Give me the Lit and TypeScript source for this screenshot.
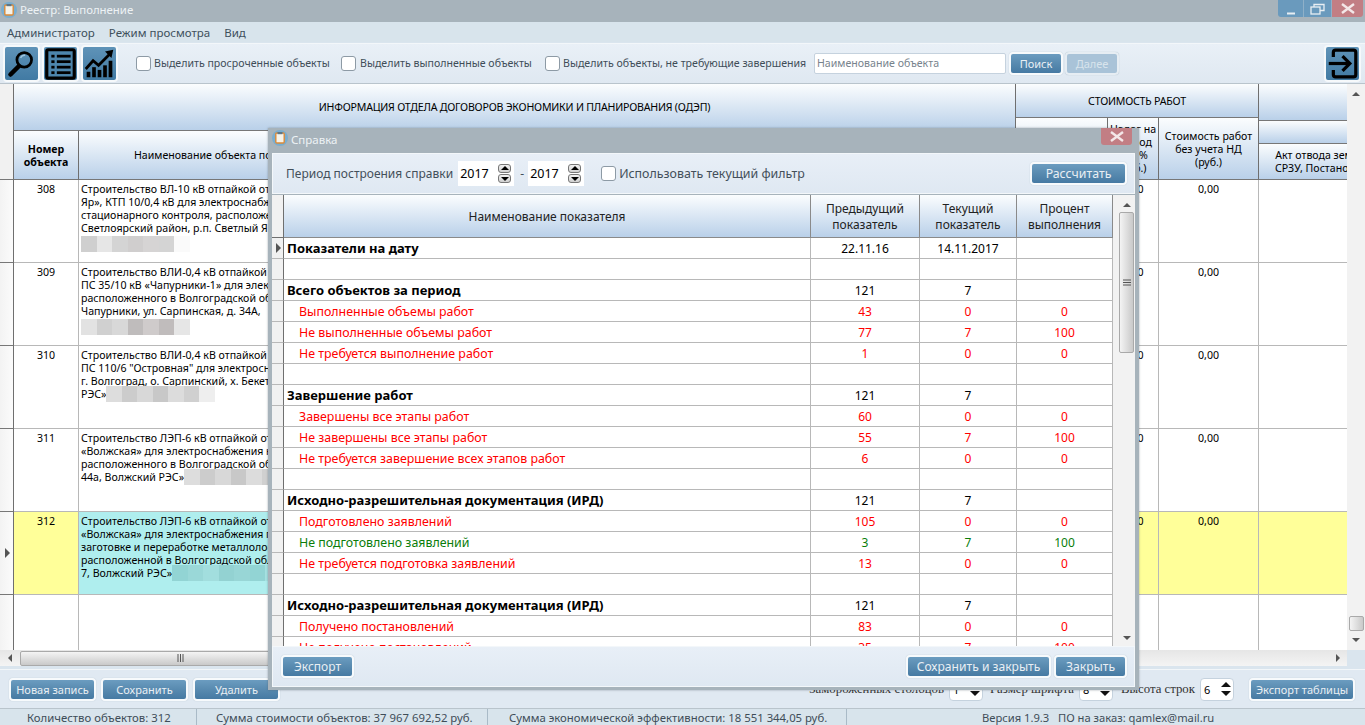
import { LitElement, html, css, svg } from "lit";
import { customElement } from "lit/decorators.js";

const appIcon = html`<svg class="appicon" viewBox="0 0 16 16" width="16" height="16"><circle cx="8" cy="8" r="8" fill="#79adcf"/><rect x="3.8" y="3" width="8.4" height="10" rx="1" fill="#f5f3ea" stroke="#d98a3a" stroke-width="1.4"/><rect x="5.5" y="2" width="5" height="2.2" fill="#5f7686"/></svg>`;

const icoSearch = svg`<circle cx="21" cy="14" r="8" fill="none" stroke="#000" stroke-width="3"/><path d="M15 21 L6 30" stroke="#000" stroke-width="5" stroke-linecap="round"/><path d="M17 12a5 5 0 0 1 5-3" stroke="#9fc5de" stroke-width="1.5" fill="none"/>`;
const icoList = svg`<rect x="3" y="3" width="30" height="31" rx="1.5" fill="#4d86ad" stroke="#000" stroke-width="3.5"/>${[10, 16, 22, 28].map(
  (y) => svg`<rect x="8" y="${y - 1.5}" width="3.5" height="3" fill="#000"/><rect x="14" y="${y - 1.5}" width="15" height="3" fill="#000"/>`
)}`;
const icoChart = svg`<path d="M3 24 L11 15 L17 20 L29 8" fill="none" stroke="#000" stroke-width="3"/><path d="M24 5 L33 3 L31 12 Z" fill="#000"/>${[
  [4, 27, 4],
  [10, 22, 4],
  [16, 25, 4],
  [22, 20, 4],
  [28, 15, 4],
].map(([x, y, w]) => svg`<rect x="${x}" y="${y}" width="${w}" height="${33 - y}" fill="#000"/>`)}`;
const icoExit = svg`<path d="M8 11 V6 a2.5 2.5 0 0 1 2.5 -2.5 H30 a2.5 2.5 0 0 1 2.5 2.5 V30 a2.5 2.5 0 0 1 -2.5 2.5 H10.5 a2.5 2.5 0 0 1 -2.5 -2.5 V25" fill="none" stroke="#000" stroke-width="3.5"/><path d="M3 18 H25" stroke="#000" stroke-width="3.5"/><path d="M18 10 L26 18 L18 26" fill="none" stroke="#000" stroke-width="3.5"/>`;
const icoClose = html`<svg width="14" height="11"><path d="M1 1l12 9M13 1L1 10" stroke="#f3e7e8" stroke-width="2.4"/></svg>`;

type Blk = string[];
const b1: Blk = ["#cfcfcf", "#e6e6e6", "#d4d4d4", "#d0cece", "#d6d4d4", "#d4d4d4", "#fafafa"];
const b2: Blk = ["#e2e2e2", "#d0d0d0", "#d8d8d8", "#bfbcbc", "#cfcbcb", "#c0bcbc", "#e6e6e6"];
const b3: Blk = ["#dddddd", "#cccccc", "#d8d8d8", "#c8c8c8", "#dcdcdc", "#d0d0d0", "#eeeeee"];
const b4: Blk = ["#92d4d4", "#9ad8d8", "#a2dede", "#93d2d2", "#98d6d6", "#92d4d4", "#a6e2e2"];

const rows = [
  {
    n: "308",
    lines: [
      "Строительство ВЛ-10 кВ отпайкой от",
      "Яр», КТП 10/0,4 кВ для электроснабжения",
      "стационарного контроля, расположенного",
      "Светлоярский район, р.п. Светлый Яр",
    ],
    tail: "",
    blur: b1,
  },
  {
    n: "309",
    lines: [
      "Строительство ВЛИ-0,4 кВ отпайкой от",
      "ПС 35/10 кВ «Чапурники-1» для электроснабжения",
      "расположенного в Волгоградской области",
      "Чапурники, ул. Сарпинская, д. 34А,",
    ],
    tail: "",
    blur: b2,
  },
  {
    n: "310",
    lines: [
      "Строительство ВЛИ-0,4 кВ отпайкой от",
      'ПС 110/6 "Островная" для электроснабжения',
      "г. Волгоград, о. Сарпинский, х. Бекетовка",
    ],
    tail: "РЭС»",
    blur: b3,
  },
  {
    n: "311",
    lines: [
      "Строительство ЛЭП-6 кВ отпайкой от",
      "«Волжская» для электроснабжения нежилого",
      "расположенного в Волгоградской области",
    ],
    tail: "44а, Волжский РЭС»",
    blur: b3,
  },
  {
    n: "312",
    lines: [
      "Строительство ЛЭП-6 кВ отпайкой от",
      "«Волжская» для электроснабжения пункта по",
      "заготовке и переработке металлолома",
      "расположенной в Волгоградской области",
    ],
    tail: "7, Волжский РЭС»",
    blur: b4,
    sel: true,
  },
];

type R = { t?: string; a?: string; b?: string; c?: string; k?: string };
const stats: R[] = [
  { t: "Показатели на дату", a: "22.11.16", b: "14.11.2017", c: "", k: "bold" },
  {},
  { t: "Всего объектов за период", a: "121", b: "7", c: "", k: "bold" },
  { t: "Выполненные объемы работ", a: "43", b: "0", c: "0", k: "red" },
  { t: "Не выполненные объемы работ", a: "77", b: "7", c: "100", k: "red" },
  { t: "Не требуется выполнение работ", a: "1", b: "0", c: "0", k: "red" },
  {},
  { t: "Завершение работ", a: "121", b: "7", c: "", k: "bold" },
  { t: "Завершены все этапы работ", a: "60", b: "0", c: "0", k: "red" },
  { t: "Не завершены все этапы работ", a: "55", b: "7", c: "100", k: "red" },
  { t: "Не требуется завершение всех этапов работ", a: "6", b: "0", c: "0", k: "red" },
  {},
  { t: "Исходно-разрешительная документация (ИРД)", a: "121", b: "7", c: "", k: "bold" },
  { t: "Подготовлено заявлений", a: "105", b: "0", c: "0", k: "red" },
  { t: "Не подготовлено заявлений", a: "3", b: "7", c: "100", k: "green" },
  { t: "Не требуется подготовка заявлений", a: "13", b: "0", c: "0", k: "red" },
  {},
  { t: "Исходно-разрешительная документация (ИРД)", a: "121", b: "7", c: "", k: "bold" },
  { t: "Получено постановлений", a: "83", b: "0", c: "0", k: "red" },
  { t: "Не получено постановлений", a: "35", b: "7", c: "100", k: "red" },
];

const spinBtns = html`<span class="spinbtns"><i class="up"></i><i class="down"></i></span>`;
const arrows = html`<span class="arrows"><i></i><i></i></span>`;

@customElement("app-root")
export class AppRoot extends LitElement {
  static styles = css`
    :host {
      display: block;
      position: relative;
      width: 1365px;
      height: 725px;
      overflow: hidden;
      background: #dae5ee;
      font-family: "Noto Sans", "Liberation Sans", sans-serif;
      font-size: 10.6px;
      color: #000;
    }
    * { box-sizing: border-box; }
    .titlebar {
      height: 22px;
      background: #a7b3bb;
      display: flex;
      align-items: flex-start;
      color: #edf2f5;
      font-size: 11.4px;
      line-height: 20px;
    }
    .appicon { flex: none; margin: 2px 3px 0 1px; }
    .title { flex: 1; }
    .winbtns { display: flex; margin-right: 2px; height: 17px; }
    .winbtn { height: 17px; display: flex; align-items: center; justify-content: center; background: #6a9abd; border-right: 1px solid #8fb0c8; }
    .winbtn.min { width: 26px; border-radius: 0 0 0 3px; }
    .winbtn.max { width: 28px; }
    .winbtn.close { width: 31px; background: #c27e84; border: 0; border-radius: 0 0 3px 0; }
    .menu {
      height: 20px;
      background: #d8e4ec;
      display: flex;
      gap: 14px;
      padding-left: 7px;
      align-items: center;
      color: #40505c;
      font-size: 11.5px;
    }
    .toolbar {
      height: 41px;
      margin-top: 1px;
      background: linear-gradient(#e9f0f7, #dfe8f1);
      border-top: 1px solid #f3f7fa;
      border-bottom: 1px solid #b9c4cc;
      display: flex;
      align-items: center;
      padding: 0 2px 1px 3px;
      color: #3f4d58;
    }
    .tbtn {
      width: 37px;
      height: 37px;
      flex: none;
      margin-right: 2px;
      background: linear-gradient(#5f93b8, #417aa3);
      border: 2px solid #f6f9fb;
      border-radius: 4px;
      display: flex;
      align-items: center;
      justify-content: center;
    }
    .tbtn svg { display: block; }
    .chk { display: flex; align-items: center; white-space: nowrap; flex: none; }
    .chk1 { margin-left: 16px; width: 205px; }
    .chk2 { width: 204px; }
    .chk3 { width: 269px; }
    .box {
      width: 15px;
      height: 15px;
      flex: none;
      background: #fff;
      border: 1px solid #8d9aa5;
      border-radius: 3px;
      margin-right: 3px;
    }
    .chk2 .box { margin-right: 4px; }
    .search {
      width: 192px;
      height: 21px;
      background: #fff;
      border: 1px solid #c5d2de;
      border-radius: 2px;
      padding-left: 2px;
      line-height: 19px;
      color: #77838d;
      flex: none;
    }
    .btn {
      flex: none;
      display: flex;
      align-items: center;
      justify-content: center;
      height: 23px;
      background: linear-gradient(#6b9cc0 0%, #5a8cb1 45%, #467aa3 100%);
      border: 2px solid #f7fafc;
      border-radius: 4px;
      color: #e9eff4;
      box-shadow: 0 0 1px #9fb2c2;
      white-space: nowrap;
      font-size: 11px;
    }
    .btn.off { background: #a9c3d8; color: #d8e4ec; border-color: #e6edf3; }
    .btn-find { width: 54px; margin-left: 3px; }
    .btn-next { width: 54px; margin-left: 2px; }
    .btn-act { width: 87px; }
    .btn-act + .btn-act { margin-left: 5px; }
    .btn-export { width: 106px; margin-left: 15px; margin-right: 1px; }
    .btn-calc { width: 97px; font-size: 12.3px; }
    .btn-dexp { width: 73px; font-size: 12px; }
    .btn-save { width: 145px; font-size: 12.1px; }
    .btn-close { width: 73px; margin-left: 3px; font-size: 12.2px; }
    .grow { flex: 1; }

    .gridwrap { height: 566px; background: #fff; display: flex; overflow: hidden; }
    .gridmain { width: 1347px; height: 566px; overflow: hidden; flex: none; }
    .ghead { display: flex; height: 96px; }
    .gcorner { width: 14px; background: #f1f1f1; border-right: 1px solid #6f6f6f; border-bottom: 1px solid #777; flex: none; }
    .hc {
      background: linear-gradient(#fbfdfe, #b9d0e9);
      border-right: 1px solid #6f6f6f;
      border-bottom: 1px solid #777;
      display: flex;
      align-items: center;
      justify-content: center;
      text-align: center;
      overflow: hidden;
      line-height: 13px;
      flex: none;
      padding-top: 1px;
    }
    .caps { letter-spacing: -0.21px; }
    .hh34.caps { padding-top: 2px; }
    .hgroup { display: flex; flex-direction: column; flex: none; }
    .hg1 { width: 1002px; }
    .hg2 { width: 243px; }
    .hg3 { width: 88px; overflow: hidden; }
    .hh47 { height: 47px; }
    .hh34 { height: 34px; }
    .hh37 { height: 37px; }
    .hh23 { height: 23px; }
    .hh36 { height: 36px; }
    .wide { width: 196px; border-right: 0; white-space: nowrap; }
    .hrow { display: flex; flex: 1; }
    .b { font-weight: 700; }
    .hname { justify-content: flex-start; padding-left: 55px; white-space: nowrap; }
    .grow-row { display: flex; height: 83px; }
    .grow-row.last { height: 60px; }
    .last > * { border-bottom: 0; }
    .rh { width: 14px; flex: none; background: linear-gradient(90deg, #f3f3f3, #fbfbfb); border-right: 1px solid #6f6f6f; border-bottom: 1px solid #777; display: flex; align-items: center; padding-left: 5px; }
    .tri { width: 0; height: 0; border-left: 5px solid #555; border-top: 5px solid transparent; border-bottom: 5px solid transparent; }
    .c { flex: none; border-right: 1px solid #b8b8b8; border-bottom: 1px solid #b8b8b8; overflow: hidden; padding: 3px 2px 0; line-height: 13px; text-align: center; }
    .c.name { text-align: left; white-space: nowrap; }
    .sel .c { background: #ffff99; }
    .sel .c.name { background: #afeeee; }
    .blur { display: flex; height: 16px; margin-top: -2px; }
    .blur i { display: block; width: 15.5px; height: 16px; }
    .gap3 { height: 3px; }
    .inl { display: flex; height: 13px; }
    .w1 { width: 65px; }
    .w2 { width: 937px; }
    .w3 { width: 92px; }
    .w4 { width: 51px; padding-left: 0; padding-right: 0; }
    .w5 { width: 100px; }
    .w6 { width: 88px; border-right: 0; }
    .vbar { width: 18px; flex: none; background: #f2f2f2; display: flex; flex-direction: column; align-items: center; }
    .sb-arrow { width: 0; height: 0; border-left: 4px solid transparent; border-right: 4px solid transparent; flex: none; }
    .sb-arrow.u { border-bottom: 4px solid #555; margin-top: 8px; }
    .sb-arrow.d { border-top: 4px solid #555; }
    .vthumb { width: 15px; background: linear-gradient(90deg, #f4f4f4, #c9c9c9); border: 1px solid #a9a9a9; border-radius: 2px; flex: none; }
    .vthumb.main { height: 15px; margin-bottom: 7px; }
    .sb-arrow.d.main { margin-bottom: 8px; }
    .vthumb.dlg { height: 141px; margin-top: 5px; display: flex; align-items: center; justify-content: center; }
    .sb-arrow.d.dlg { margin-bottom: 6px; }
    .hbar { height: 16px; background: linear-gradient(#e6e6e6, #f4f4f4); display: flex; align-items: center; width: 1347px; }
    .sb-arrow.l { border: 0; border-top: 4px solid transparent; border-bottom: 4px solid transparent; border-right: 4px solid #555; margin-left: 8px; }
    .sb-arrow.r { border: 0; border-top: 4px solid transparent; border-bottom: 4px solid transparent; border-left: 4px solid #555; margin-right: 7px; }
    .hthumb { width: 322px; height: 15px; margin-left: 8px; background: linear-gradient(#f4f4f4, #c9c9c9); border: 1px solid #a9a9a9; border-radius: 2px; display: flex; align-items: center; justify-content: center; flex: none; }
    .grip { display: block; }

    .bottom { height: 40px; background: #e0e9f2; border-top: 1px solid #f2f6f9; border-bottom: 1px solid #b9c4cc; margin-top: 3px; display: flex; align-items: center; padding: 0 9px; color: #3f4d58; }
    .lbl { font-family: "Liberation Serif", serif; font-size: 12.8px; white-space: nowrap; color: #333; }
    .lbl2 { margin-left: 7px; }
    .lbl3 { margin-left: 8px; }
    .spin { height: 23px; width: 34px; margin-left: 5px; background: #fff; border: 1px solid #c5d2de; border-radius: 4px; display: flex; align-items: center; padding: 0 2px 0 3px; flex: none; color: #000; font-size: 11px; justify-content: space-between; }
    .arrows { display: flex; flex-direction: column; gap: 4px; }
    .arrows i { display: block; width: 0; height: 0; border-left: 5px solid transparent; border-right: 5px solid transparent; }
    .arrows i:first-child { border-bottom: 5px solid #111; }
    .arrows i:last-child { border-top: 5px solid #111; }
    .status { height: 16px; background: #d8e4ec; display: flex; color: #3f4d58; line-height: 17px; white-space: nowrap; font-size: 11.35px; }
    .status > div { border-right: 1px solid #a9bac7; height: 16px; flex: none; }
    .st1 { width: 197px; padding-left: 27px; }
    .st2 { width: 291px; padding-left: 19px; }
    .st3 { width: 359px; padding-left: 21px; }
    .status > .st4 { border: 0; flex: 1; padding-left: 135px; font-size: 11.2px; }

    .dialog {
      position: absolute;
      left: 268px;
      top: 128px;
      width: 871px;
      height: 562px;
      background: #a7b3bb;
      padding: 0 4px 3px 4px;
      box-shadow: 0 0 2px rgba(80, 90, 100, 0.5);
      display: flex;
      flex-direction: column;
    }
    .dtitle { height: 25px; display: flex; color: #edf2f5; line-height: 24px; font-size: 11.5px; flex: none; position: relative; margin-left: -1px; }
    .dclose { position: absolute; right: 3px; top: 0; width: 31px; height: 17px; background: #c27e84; border-radius: 0 0 3px 3px; display: flex; align-items: center; justify-content: center; }
    .dpanel { height: 41px; flex: none; background: linear-gradient(#e8eff7, #dfe8f2); border: 1px solid #f3f7fa; display: flex; align-items: center; padding: 0 7px 0 13px; color: #434f5a; font-size: 12px; }
    .dspin { height: 25px; width: 56px; background: #fff; display: flex; align-items: center; justify-content: space-between; padding: 0 3px 0 2px; color: #000; font-size: 12.5px; flex: none; margin-left: 5px; }
    .dash { margin-left: 6px; width: 8px; }
    .dspin2 { margin-left: 0; }
    .dchk { margin-left: 17px; font-size: 12.4px; }
    .spinbtns { display: flex; flex-direction: column; gap: 1px; }
    .spinbtns i { display: block; width: 13px; height: 9px; background: linear-gradient(#f2f2f2, #cfcfcf); border: 1px solid #777; border-radius: 3px; position: relative; }
    .spinbtns i::after { content: ""; position: absolute; left: 1.5px; width: 0; height: 0; border-left: 4px solid transparent; border-right: 4px solid transparent; }
    .spinbtns i.up::after { top: 1px; border-bottom: 4px solid #000; }
    .spinbtns i.down::after { top: 2px; border-top: 4px solid #000; }
    .dtablewrap { flex: 1; min-height: 0; background: #fff; display: flex; overflow: hidden; margin-top: 1px; }
    .dtable { width: 841px; flex: none; font-size: 12px; }
    .dh { display: flex; height: 43px; }
    .dcorner { width: 12px; border-color: #6f6f6f; }
    .dh .hc { line-height: 16px; border-color: #8a8a8a; color: #222; }
    .drow { display: flex; height: 21px; }
    .drh { width: 12px; flex: none; background: #f1f1f1; border-right: 1px solid #6f6f6f; border-bottom: 1px solid #b8b8b8; display: flex; align-items: center; padding-left: 4px; }
    .dcell { flex: none; border-right: 1px solid #b8b8b8; border-bottom: 1px solid #b8b8b8; display: flex; align-items: center; justify-content: center; white-space: nowrap; }
    .dcell.t { justify-content: flex-start; padding-left: 3px; font-size: 12.4px; }
    .da { width: 527px; }
    .db { width: 109px; }
    .dc { width: 97px; }
    .dd { width: 96px; }
    .k-bold .t.t { font-weight: 700; font-size: 13px; }
    .k-red .dcell { color: #f00; }
    .k-red .t { padding-left: 15px; }
    .k-green .dcell { color: #0a7d0a; }
    .k-green .t { padding-left: 15px; }
    .dvbar { flex: 1; background: #f2f2f2; display: flex; flex-direction: column; align-items: center; padding-left: 5px; }
    .dfoot { height: 41px; flex: none; background: linear-gradient(#e8eff7, #dfe8f2); border: 1px solid #f3f7fa; display: flex; align-items: center; padding: 0 7px 0 8px; }
  `;

  blur(c: Blk) {
    return html`<div class="blur">${c.map((x) => html`<i style="background:${x}"></i>`)}</div>`;
  }

  render() {
    return html`
      <div class="titlebar">
        ${appIcon}
        <div class="title">Реестр: Выполнение</div>
        <div class="winbtns">
          <div class="winbtn min"><svg width="12" height="12"><path d="M2 10.5h8" stroke="#e8eef3" stroke-width="2"/></svg></div>
          <div class="winbtn max"><svg width="15" height="12" fill="none" stroke="#e8eef3" stroke-width="1.3"><rect x="1" y="4" width="9" height="7"/><path d="M4 4V1.5h10v6h-4"/></svg></div>
          <div class="winbtn close">${icoClose}</div>
        </div>
      </div>
      <div class="menu"><span>Администратор</span><span>Режим просмотра</span><span>Вид</span></div>
      <div class="toolbar">
        <div class="tbtn"><svg width="33" height="33" viewBox="0 0 36 36">${icoSearch}</svg></div>
        <div class="tbtn"><svg width="35" height="35" viewBox="0 0 36 36">${icoList}</svg></div>
        <div class="tbtn"><svg width="33" height="33" viewBox="0 0 36 36">${icoChart}</svg></div>
        <div class="chk chk1"><span class="box"></span>Выделить просроченные объекты</div>
        <div class="chk chk2"><span class="box"></span>Выделить выполненные объекты</div>
        <div class="chk chk3"><span class="box"></span>Выделить объекты, не требующие завершения</div>
        <div class="search">Наименование объекта</div>
        <div class="btn btn-find">Поиск</div>
        <div class="btn off btn-next">Далее</div>
        <div class="grow"></div>
        <div class="tbtn"><svg width="35" height="35" viewBox="0 0 36 36">${icoExit}</svg></div>
      </div>
      <div class="gridwrap">
        <div class="gridmain">
          <div class="ghead">
            <div class="gcorner"></div>
            <div class="hgroup hg1">
              <div class="hc hh47 caps">ИНФОРМАЦИЯ ОТДЕЛА ДОГОВОРОВ ЭКОНОМИКИ И ПЛАНИРОВАНИЯ (ОДЭП)</div>
              <div class="hrow">
                <div class="hc b w1">Номер<br />объекта</div>
                <div class="hc w2 hname">Наименование объекта по договору</div>
              </div>
            </div>
            <div class="hgroup hg2">
              <div class="hc hh34 caps">СТОИМОСТЬ РАБОТ</div>
              <div class="hrow">
                <div class="hc w3"></div>
                <div class="hc w4">Налог на<br />период<br />15,5%<br />(руб.)</div>
                <div class="hc w5">Стоимость работ<br />без учета НД<br />(руб.)</div>
              </div>
            </div>
            <div class="hgroup hg3">
              <div class="hc hh37 wide"></div>
              <div class="hc hh23 wide"></div>
              <div class="hc hh36 wide">Акт отвода земельного участка,<br />СРЗУ, Постановление об отводе</div>
            </div>
          </div>
          ${rows.map(
            (r) => html`<div class="grow-row ${r.sel ? "sel" : ""}">
              <div class="rh">${r.sel ? html`<span class="tri"></span>` : ""}</div>
              <div class="c w1">${r.n}</div>
              <div class="c name w2">
                ${r.lines.map((l) => html`<div>${l}</div>`)}
                ${r.tail
                  ? html`<div class="inl"><span>${r.tail}</span>${this.blur(r.blur)}</div>`
                  : html`<div class="gap3"></div>${this.blur(r.blur)}`}
              </div>
              <div class="c w3"></div>
              <div class="c w4">0,00</div>
              <div class="c w5">0,00</div>
              <div class="c w6"></div>
            </div>`
          )}
          <div class="grow-row last">
            <div class="rh"></div>
            <div class="c w1"></div>
            <div class="c name w2"></div>
            <div class="c w3"></div>
            <div class="c w4"></div>
            <div class="c w5"></div>
          </div>
        </div>
        <div class="vbar">
          <span class="sb-arrow u"></span>
          <div class="grow"></div>
          <div class="vthumb main"></div>
          <span class="sb-arrow d main"></span>
        </div>
      </div>
      <div class="hbar">
        <span class="sb-arrow l"></span>
        <div class="hthumb">
          <svg class="grip" width="8" height="8"><path d="M1 0v8M3.5 0v8M6 0v8" stroke="#555"/></svg>
        </div>
        <div class="grow"></div>
        <span class="sb-arrow r"></span>
      </div>
      <div class="bottom">
        <div class="btn btn-act">Новая запись</div>
        <div class="btn btn-act">Сохранить</div>
        <div class="btn btn-act">Удалить</div>
        <div class="grow"></div>
        <div class="lbl">Замороженных столбцов</div>
        <div class="spin"><span>1</span>${arrows}</div>
        <div class="lbl lbl2">Размер шрифта</div>
        <div class="spin"><span>8</span>${arrows}</div>
        <div class="lbl lbl3">Высота строк</div>
        <div class="spin"><span>6</span>${arrows}</div>
        <div class="btn btn-export">Экспорт таблицы</div>
      </div>
      <div class="status">
        <div class="st1">Количество объектов: 312</div>
        <div class="st2">Сумма стоимости объектов: 37 967 692,52 руб.</div>
        <div class="st3">Сумма экономической эффективности: 18 551 344,05 руб.</div>
        <div class="st4">Версия 1.9.3 &nbsp; ПО на заказ: qamlex@mail.ru</div>
      </div>

      <div class="dialog">
        <div class="dtitle">
          ${appIcon}<span>Справка</span>
          <div class="dclose">${icoClose}</div>
        </div>
        <div class="dpanel">
          <span>Период построения справки</span>
          <div class="dspin"><span>2017</span>${spinBtns}</div>
          <span class="dash">-</span>
          <div class="dspin dspin2"><span>2017</span>${spinBtns}</div>
          <div class="chk dchk"><span class="box"></span>Использовать текущий фильтр</div>
          <div class="grow"></div>
          <div class="btn btn-calc">Рассчитать</div>
        </div>
        <div class="dtablewrap">
          <div class="dtable">
            <div class="dh">
              <div class="gcorner dcorner"></div>
              <div class="hc da">Наименование показателя</div>
              <div class="hc db">Предыдущий<br />показатель</div>
              <div class="hc dc">Текущий<br />показатель</div>
              <div class="hc dd">Процент<br />выполнения</div>
            </div>
            ${stats.map(
              (s, i) => html`<div class="drow k-${s.k ?? "none"}">
                <div class="drh">${i === 0 ? html`<span class="tri"></span>` : ""}</div>
                <div class="dcell t da">${s.t}</div>
                <div class="dcell db">${s.a}</div>
                <div class="dcell dc">${s.b}</div>
                <div class="dcell dd">${s.c}</div>
              </div>`
            )}
          </div>
          <div class="dvbar">
            <span class="sb-arrow u"></span>
            <div class="vthumb dlg">
              <svg width="8" height="8"><path d="M0 1h8M0 3.5h8M0 6h8" stroke="#555"/></svg>
            </div>
            <div class="grow"></div>
            <span class="sb-arrow d dlg"></span>
          </div>
        </div>
        <div class="dfoot">
          <div class="btn btn-dexp">Экспорт</div>
          <div class="grow"></div>
          <div class="btn btn-save">Сохранить и закрыть</div>
          <div class="btn btn-close">Закрыть</div>
        </div>
      </div>
    `;
  }
}
